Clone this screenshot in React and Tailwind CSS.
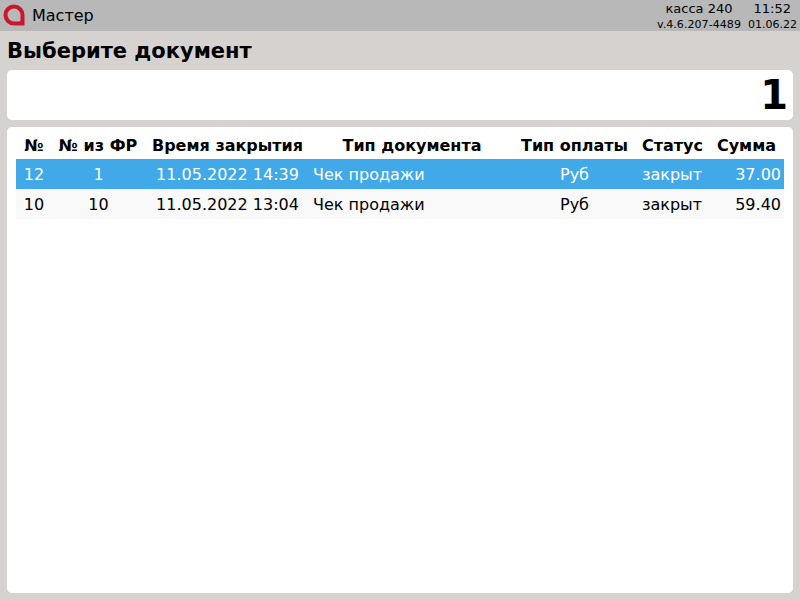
import React from "react";

const font = { fontFamily: "'DejaVu Sans', sans-serif" };

const rows = [
  { id: "12", fr: "1", time: "11.05.2022 14:39", type: "Чек продажи", pay: "Руб", status: "закрыт", sum: "37.00", active: true },
  { id: "10", fr: "10", time: "11.05.2022 13:04", type: "Чек продажи", pay: "Руб", status: "закрыт", sum: "59.40" },
];

const Logo = () => (
  <svg width="22" height="22" viewBox="0 0 22 22" className="shrink-0 -mt-[1px]">
    <path
      fillRule="evenodd"
      d="M11 .5a10.500 10.500 0 0 0 0 21h10.500V11A10.500 10.500 0 0 0 11 .5zM11 4.500a6.500 6.500 0 0 0 0 13h5q1.500 0 1.500-1.500V11A6.500 6.500 0 0 0 11 4.500z"
      fill="#c8192b"
    />
  </svg>
);

const App = () => {
  return (
    <div className="w-[800px] h-[600px] flex flex-col bg-[#d6d2cf] text-black overflow-hidden" style={font}>
      <div className="h-[31px] shrink-0 flex items-center justify-between bg-[#b8b8b8] pl-[3px] pr-[3px]">
        <div className="flex items-center gap-[7px]">
          <Logo />
          <span className="text-base">Мастер</span>
        </div>
        <div className="flex flex-col items-end">
          <div className="flex text-[13px] leading-[17px] pr-[6px] gap-[21px]">
            <span>касса 240</span>
            <span>11:52</span>
          </div>
          <div className="flex text-[11px] leading-[13px] gap-[7px] mt-[1px]">
            <span className="tracking-[0.07px]">v.4.6.207-4489</span>
            <span>01.06.22</span>
          </div>
        </div>
      </div>

      <h1 className="h-[39px] shrink-0 px-[7px] pt-[1px] text-[21px] font-bold leading-[39px]">Выберите документ</h1>

      <div className="h-[50px] shrink-0 mx-[7px] bg-white rounded-[5px] flex items-center justify-end pr-[5px]">
        <span className="text-[40px] font-bold leading-none">1</span>
      </div>

      <div className="flex-1 mx-[7px] mt-[7px] mb-[7px] bg-white rounded-[5px] px-[9px] pt-[4px]">
        <table className="w-[768px] table-fixed border-collapse text-base">
          <colgroup>
            <col className="w-[36px]" />
            <col className="w-[93px]" />
            <col className="w-[165px]" />
            <col className="w-[204px]" />
            <col className="w-[121px]" />
            <col className="w-[75px]" />
            <col className="w-[74px]" />
          </colgroup>
          <thead>
            <tr className="h-[28px]">
              <th className="font-bold text-center p-0 pt-[2px]">№</th>
              <th className="font-bold text-center p-0 pt-[2px] pr-[1px]">№ из ФР</th>
              <th className="font-bold text-center p-0 pt-[2px]">Время закрытия</th>
              <th className="font-bold text-center p-0 pt-[2px]">Тип документа</th>
              <th className="font-bold text-center p-0 pt-[2px]">Тип оплаты</th>
              <th className="font-bold text-center p-0 pt-[2px]">Статус</th>
              <th className="font-bold text-center p-0 pt-[2px] pr-[1px]">Сумма</th>
            </tr>
          </thead>
          <tbody>
            {rows.map((row) => (
              <tr key={row.id} className={row.active ? "h-[30px] bg-[#42a9e9] text-white" : "h-[30px] bg-[#f9f9f9]"}>
                <td className="text-center p-0 pt-[2px]">{row.id}</td>
                <td className="text-center p-0 pt-[2px]">{row.fr}</td>
                <td className="text-center p-0 pt-[2px]">{row.time}</td>
                <td className="text-left p-0 pt-[2px] pl-[3px]">{row.type}</td>
                <td className="text-center p-0 pt-[2px]">{row.pay}</td>
                <td className="text-center p-0 pt-[2px] pr-[1px]">{row.status}</td>
                <td className="text-right p-0 pt-[2px] pr-[3px]">{row.sum}</td>
              </tr>
            ))}
          </tbody>
        </table>
      </div>
    </div>
  );
};

export default App;
